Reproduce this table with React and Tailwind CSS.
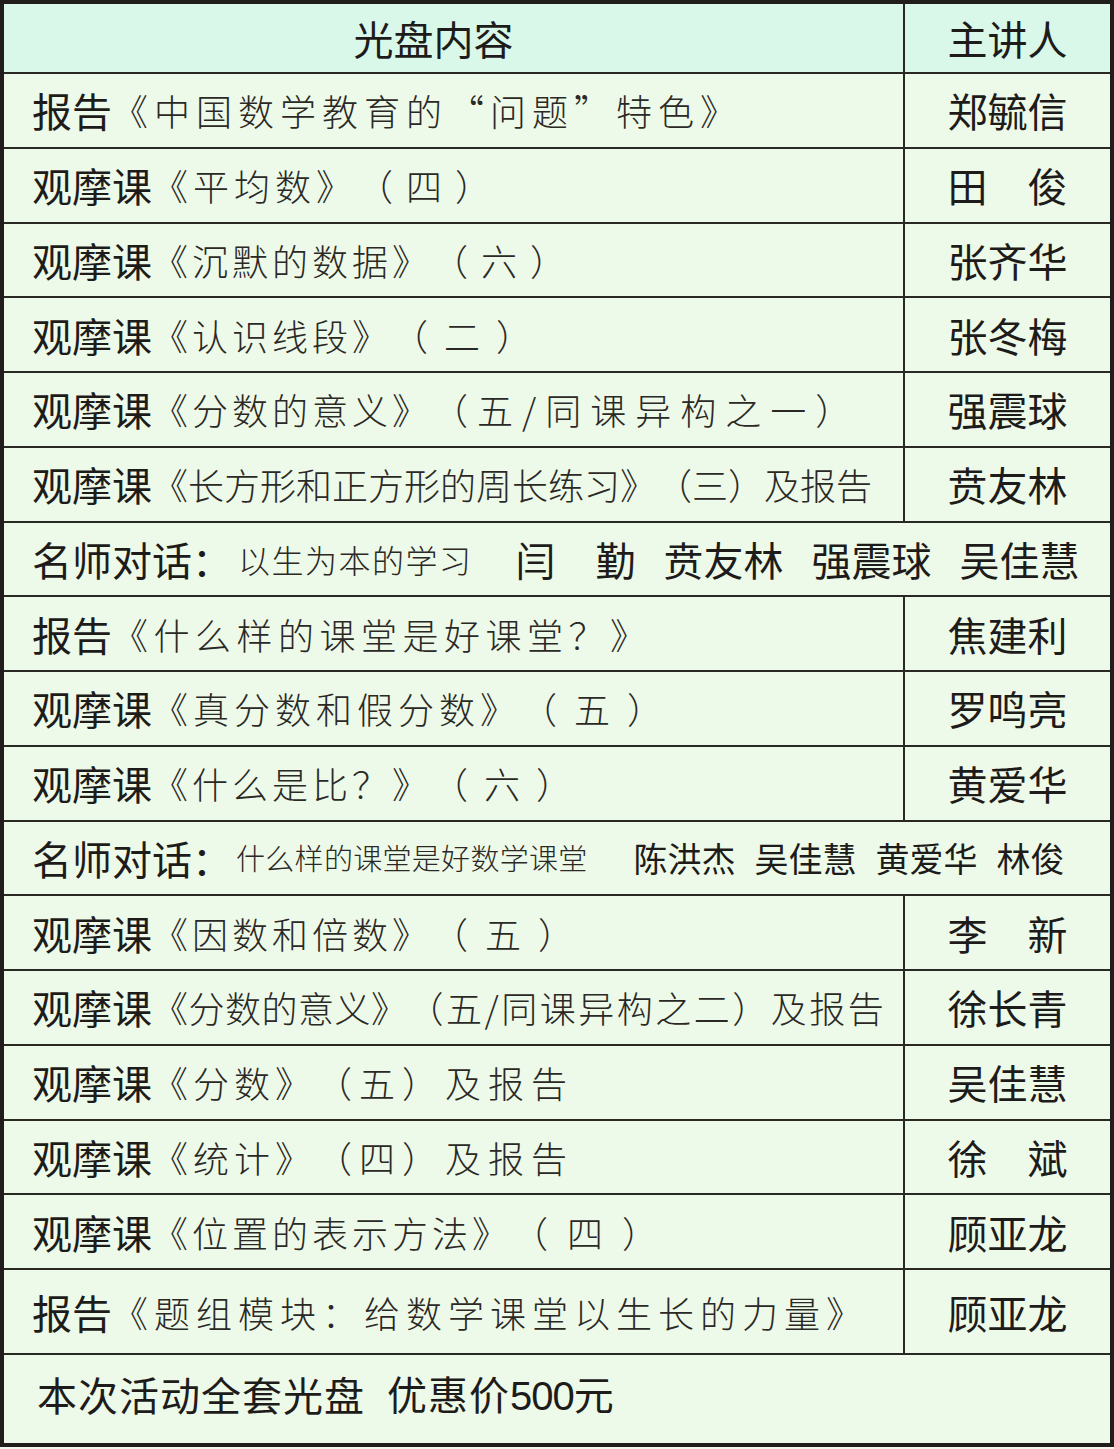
import React from 'react'

const rows = [
  { p: '报告', t: '《中国数学教育的“问题”特色》', tt: 'tracking-[6px]', s: '郑毓信' },
  { p: '观摩课', t: '《平均数》', tt: 'tracking-[5px]', q: '（四）', qt: 'tracking-[13px]', s: '田　俊' },
  { p: '观摩课', t: '《沉默的数据》', tt: 'tracking-[4px]', q: '（六）', qt: 'tracking-[13px]', s: '张齐华' },
  { p: '观摩课', t: '《认识线段》', tt: 'tracking-[4px]', q: '（二）', qt: 'tracking-[16px]', s: '张冬梅' },
  { p: '观摩课', t: '《分数的意义》', tt: 'tracking-[4px]', q: '（五/同课异构之一）', qt: 'tracking-[9px]', s: '强震球' },
  { p: '观摩课', t: '《长方形和正方形的周长练习》', tt: 'tracking-[0px]', q: '（三）及报告', qt: 'tracking-[0px]', s: '贲友林' },
  { dialog: 1 },
  { p: '报告', t: '《什么样的课堂是好课堂？》', tt: 'tracking-[5.5px]', s: '焦建利' },
  { p: '观摩课', t: '《真分数和假分数》', tt: 'tracking-[5px]', q: '（五）', qt: 'tracking-[17px]', s: '罗鸣亮' },
  { p: '观摩课', t: '《什么是比？》', tt: 'tracking-[4px]', q: '（六）', qt: 'tracking-[16px]', s: '黄爱华' },
  { dialog: 2 },
  { p: '观摩课', t: '《因数和倍数》', tt: 'tracking-[4px]', q: '（五）', qt: 'tracking-[17px]', s: '李　新' },
  { p: '观摩课', t: '《分数的意义》', tt: 'tracking-[0.5px]', q: '（五/同课异构之二）及报告', qt: 'tracking-[2.5px]', s: '徐长青' },
  { p: '观摩课', t: '《分数》', tt: 'tracking-[5px]', q: '（五）及报告', qt: 'tracking-[7px]', s: '吴佳慧' },
  { p: '观摩课', t: '《统计》', tt: 'tracking-[5px]', q: '（四）及报告', qt: 'tracking-[7px]', s: '徐　斌' },
  { p: '观摩课', t: '《位置的表示方法》', tt: 'tracking-[4px]', q: '（四）', qt: 'tracking-[19px]', s: '顾亚龙' },
  { p: '报告', t: '《题组模块：给数学课堂以生长的力量》', tt: 'tracking-[6px]', s: '顾亚龙', tall: true },
]

function LessonRow({ row }) {
  return (
    <div className={`flex border-b-2 border-[#2a2823] ${row.tall ? 'h-[85px]' : 'h-[74.75px]'}`}>
      <div className="flex w-[899px] items-center pl-[28px] whitespace-nowrap text-[#1e1c1a]">
        <span className="text-[40px] leading-none">{row.p}</span>
        <span className={`text-[36px] font-light leading-none text-[#2b2926] [text-spacing-trim:space-all] ${row.tt}`}>{row.t}</span>
        {row.q && (
          <span className={`text-[36px] font-light leading-none text-[#2b2926] [text-spacing-trim:space-all] ${row.qt}`}>{row.q}</span>
        )}
      </div>
      <div className="flex flex-1 items-center justify-center border-l-2 border-[#2a2823] text-[40px] leading-none text-[#1e1c1a]">
        {row.s}
      </div>
    </div>
  )
}

function DialogRow({ n }) {
  if (n === 1) {
    return (
      <div className="flex h-[74.75px] items-center border-b-2 border-[#2a2823] pl-[28px] whitespace-nowrap text-[#1e1c1a]">
        <span className="text-[40px] leading-none">名师对话：</span>
        <span className="ml-[6px] text-[32px] font-light leading-none tracking-[1.5px] text-[#2b2926]">以生为本的学习</span>
        <div className="ml-[43px] flex gap-[28px] text-[40px] leading-none">
          <span>闫　勤</span>
          <span>贲友林</span>
          <span>强震球</span>
          <span>吴佳慧</span>
        </div>
      </div>
    )
  }
  return (
    <div className="flex h-[74.75px] items-center border-b-2 border-[#2a2823] pl-[28px] whitespace-nowrap text-[#1e1c1a]">
      <span className="text-[40px] leading-none">名师对话：</span>
      <span className="ml-[4px] text-[29px] font-light leading-none tracking-[0.3px] text-[#2b2926]">什么样的课堂是好数学课堂</span>
      <div className="ml-[46px] flex gap-[19px] text-[34px] leading-none">
        <span>陈洪杰</span>
        <span>吴佳慧</span>
        <span>黄爱华</span>
        <span>林俊</span>
      </div>
    </div>
  )
}

export default function App() {
  return (
    <div className="min-h-[1449px] w-[1114px] bg-[#f3f6ee] font-['Noto_Sans_CJK_SC','Noto_Sans',sans-serif]">
      <div className="w-[1114px] border-4 border-[#211d1a] bg-[#eefae9]">
        <div className="flex h-[70px] border-b-2 border-[#2a2823] bg-[#d9f8ea]">
          <div className="flex w-[899px] items-center justify-center pr-[40px] text-[40px] leading-none text-[#1e1c1a]">
            光盘内容
          </div>
          <div className="flex flex-1 items-center justify-center border-l-2 border-[#2a2823] text-[40px] leading-none text-[#1e1c1a]">
            主讲人
          </div>
        </div>
        {rows.map((row, i) =>
          row.dialog ? <DialogRow key={i} n={row.dialog} /> : <LessonRow key={i} row={row} />
        )}
        <div className="flex h-[88px] items-center pb-[10px] pl-[33px] whitespace-nowrap text-[40px] leading-none tracking-[1px] text-[#1e1c1a]">
          <span>本次活动全套光盘</span>
          <span className="ml-[22px]">优惠价<span className="font-['Liberation_Sans',sans-serif] tracking-[-1px]">500</span>元</span>
        </div>
      </div>
    </div>
  )
}
